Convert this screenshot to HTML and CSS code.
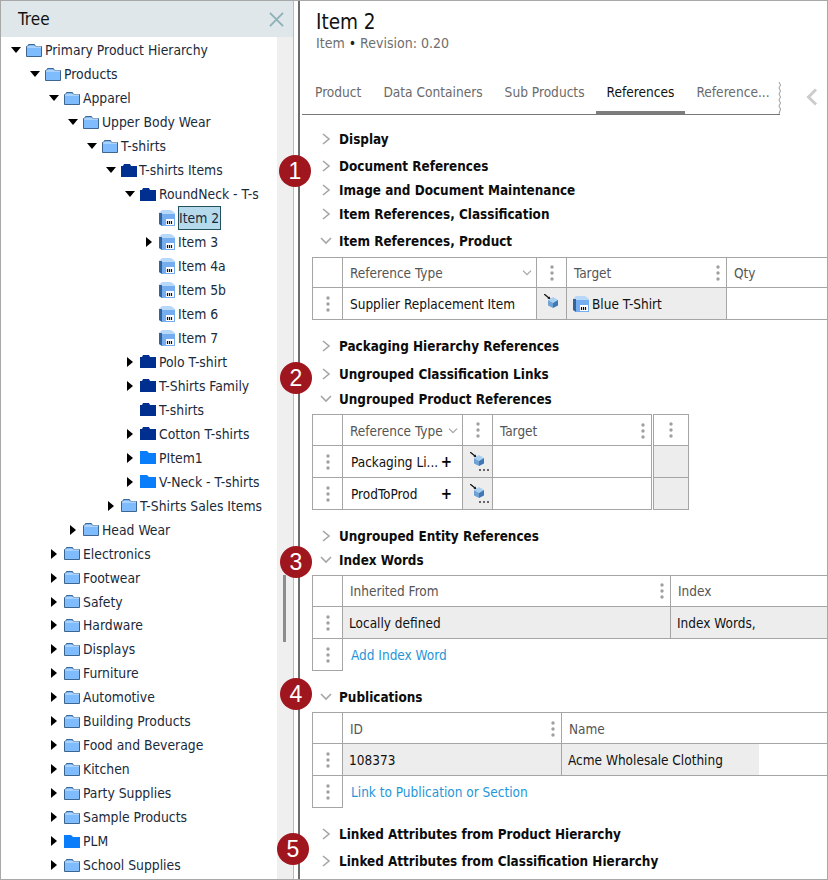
FILE: index.html
```html
<!DOCTYPE html>
<html lang="en">
<head>
<meta charset="utf-8">
<title>Item 2</title>
<link rel="stylesheet" href="styles.css">
</head>
<body>
<svg class="defs" aria-hidden="true">
  <symbol id="folder" viewBox="0 0 16 13"><path d="M.5 12.500V2.500H1.500L2.500 .5H8.500L9.500 2.500H15.500V12.500Z" fill="#7fbcfd" stroke="#3d6590"/><path d="M1 3H15" stroke="#d5e8fb"/></symbol>
  <symbol id="folder-dark" viewBox="0 0 16 13"><path d="M0 13V2H2L3 0H9L10 2H16V13Z" fill="#00308f"/></symbol>
  <symbol id="folder-bright" viewBox="0 0 16 13"><path d="M0 13V0H7L9 2H16V13Z" fill="#0a7dfb"/></symbol>
  <symbol id="item" viewBox="0 0 16 16"><path d="M0 3L3 0H12L16 3V16H3L0 14Z" fill="#b7d8f8"/><path d="M0 3L3 3V16L0 14Z" fill="#33659a"/><path d="M3 4H16V16H3Z" fill="#74aef0"/><path d="M7 9H15V15H7Z" fill="#fff"/><path d="M8.500 11V14M10.500 11V14M12.500 11V14" stroke="#111" stroke-width="1.200"/></symbol>
  <symbol id="kebab" viewBox="0 0 4 16"><circle cx="2" cy="2" r="1.700" fill="#a0a0a0"/><circle cx="2" cy="8" r="1.700" fill="#a0a0a0"/><circle cx="2" cy="14" r="1.700" fill="#a0a0a0"/></symbol>
  <symbol id="cube" viewBox="0 0 20 19"><path d="M0 0L5 4" stroke="#111" stroke-width="1.300"/><path d="M3.500 4.500L6.500 5.500L5.500 2.500Z" fill="#111"/><path d="M4 6L9 3L14 6L9 9Z" fill="#a7d0f2"/><path d="M4 6L9 9V14L4 11.500Z" fill="#6fa3d6"/><path d="M14 6L9 9V14L14 11.500Z" fill="#3f78b3"/></symbol>
  <symbol id="cube-more" viewBox="0 0 20 19"><use href="#cube"/><path d="M9 17h2v2h-2zM13 17h2v2h-2zM17 17h2v2h-2z" fill="#666"/></symbol>
  <symbol id="right" viewBox="0 0 10 12"><path d="M2 1L8 6L2 11" fill="none" stroke="#a5a5a5" stroke-width="1.600"/></symbol>
  <symbol id="down" viewBox="0 0 12 10"><path d="M1 2L6 7L11 2" fill="none" stroke="#a5a5a5" stroke-width="1.600"/></symbol>
</svg>
<div class="window">
  <aside class="tree-pane">
    <header class="tree-head"><span>Tree</span>
      <svg class="close" viewBox="0 0 16 16"><path d="M1 1L15 15M15 1L1 15" stroke="#8fb0b8" stroke-width="2"/></svg>
    </header>
    <div class="tree-body">
      <ul class="tree">
        <li class="d0"><i class="tw open"></i><svg class="fo"><use href="#folder"/></svg><span>Primary Product Hierarchy</span></li>
        <li class="d1"><i class="tw open"></i><svg class="fo"><use href="#folder"/></svg><span>Products</span></li>
        <li class="d2"><i class="tw open"></i><svg class="fo"><use href="#folder"/></svg><span>Apparel</span></li>
        <li class="d3"><i class="tw open"></i><svg class="fo"><use href="#folder"/></svg><span>Upper Body Wear</span></li>
        <li class="d4"><i class="tw open"></i><svg class="fo"><use href="#folder"/></svg><span>T-shirts</span></li>
        <li class="d5"><i class="tw open"></i><svg class="fo"><use href="#folder-dark"/></svg><span class="tight">T-shirts Items</span></li>
        <li class="d6"><i class="tw open"></i><svg class="fo"><use href="#folder-dark"/></svg><span>RoundNeck - T-s</span></li>
        <li class="d7"><i class="tw"></i><svg class="it"><use href="#item"/></svg><span class="sel">Item 2</span></li>
        <li class="d7"><i class="tw closed"></i><svg class="it"><use href="#item"/></svg><span>Item 3</span></li>
        <li class="d7"><i class="tw"></i><svg class="it"><use href="#item"/></svg><span>Item 4a</span></li>
        <li class="d7"><i class="tw"></i><svg class="it"><use href="#item"/></svg><span>Item 5b</span></li>
        <li class="d7"><i class="tw"></i><svg class="it"><use href="#item"/></svg><span>Item 6</span></li>
        <li class="d7"><i class="tw"></i><svg class="it"><use href="#item"/></svg><span>Item 7</span></li>
        <li class="d6"><i class="tw closed"></i><svg class="fo"><use href="#folder-dark"/></svg><span>Polo T-shirt</span></li>
        <li class="d6"><i class="tw closed"></i><svg class="fo"><use href="#folder-dark"/></svg><span>T-Shirts Family</span></li>
        <li class="d6"><i class="tw"></i><svg class="fo"><use href="#folder-dark"/></svg><span>T-shirts</span></li>
        <li class="d6"><i class="tw closed"></i><svg class="fo"><use href="#folder-dark"/></svg><span>Cotton T-shirts</span></li>
        <li class="d6"><i class="tw closed"></i><svg class="fo"><use href="#folder-bright"/></svg><span>PItem1</span></li>
        <li class="d6"><i class="tw closed"></i><svg class="fo"><use href="#folder-bright"/></svg><span>V-Neck - T-shirts</span></li>
        <li class="d5"><i class="tw closed"></i><svg class="fo"><use href="#folder"/></svg><span>T-Shirts Sales Items</span></li>
        <li class="d3"><i class="tw closed"></i><svg class="fo"><use href="#folder"/></svg><span>Head Wear</span></li>
        <li class="d2"><i class="tw closed"></i><svg class="fo"><use href="#folder"/></svg><span>Electronics</span></li>
        <li class="d2"><i class="tw closed"></i><svg class="fo"><use href="#folder"/></svg><span>Footwear</span></li>
        <li class="d2"><i class="tw closed"></i><svg class="fo"><use href="#folder"/></svg><span>Safety</span></li>
        <li class="d2"><i class="tw closed"></i><svg class="fo"><use href="#folder"/></svg><span>Hardware</span></li>
        <li class="d2"><i class="tw closed"></i><svg class="fo"><use href="#folder"/></svg><span>Displays</span></li>
        <li class="d2"><i class="tw closed"></i><svg class="fo"><use href="#folder"/></svg><span>Furniture</span></li>
        <li class="d2"><i class="tw closed"></i><svg class="fo"><use href="#folder"/></svg><span>Automotive</span></li>
        <li class="d2"><i class="tw closed"></i><svg class="fo"><use href="#folder"/></svg><span>Building Products</span></li>
        <li class="d2"><i class="tw closed"></i><svg class="fo"><use href="#folder"/></svg><span>Food and Beverage</span></li>
        <li class="d2"><i class="tw closed"></i><svg class="fo"><use href="#folder"/></svg><span>Kitchen</span></li>
        <li class="d2"><i class="tw closed"></i><svg class="fo"><use href="#folder"/></svg><span>Party Supplies</span></li>
        <li class="d2"><i class="tw closed"></i><svg class="fo"><use href="#folder"/></svg><span>Sample Products</span></li>
        <li class="d2"><i class="tw closed"></i><svg class="fo"><use href="#folder-bright"/></svg><span>PLM</span></li>
        <li class="d2"><i class="tw closed"></i><svg class="fo"><use href="#folder"/></svg><span>School Supplies</span></li>
      </ul>
      <div class="track"><div class="thumb"></div></div>
    </div>
  </aside>
  <main class="main">
    <h1 class="title">Item 2</h1>
    <p class="subtitle">Item <b>•</b> Revision: 0.20</p>
    <div class="tabbar">
      <nav class="tabs">
        <a class="tab">Product</a>
        <a class="tab">Data Containers</a>
        <a class="tab">Sub Products</a>
        <a class="tab active">References</a>
        <a class="tab last">Reference...</a>
        <svg class="wave" viewBox="0 0 5 32"><path d="M2 0L3.500 3L2 6L3.500 9L2 12L3.500 15L2 18L3.500 21L2 24L3.500 27L2 32" fill="none" stroke="#999"/></svg>
      </nav>
      <svg class="prev" viewBox="0 0 12 18"><path d="M10 1.500L2.500 9L10 16.500" fill="none" stroke="#ccc" stroke-width="3"/></svg>
    </div>
    <div class="sec first"><svg class="chev"><use href="#right"/></svg>Display</div>
    <div class="sec m3"><svg class="chev"><use href="#right"/></svg>Document References</div>
    <div class="sec"><svg class="chev"><use href="#right"/></svg>Image and Document Maintenance</div>
    <div class="sec"><svg class="chev"><use href="#right"/></svg>Item References, Classification</div>
    <div class="sec m3"><svg class="chev"><use href="#down"/></svg>Item References, Product</div>
    <table class="grid t1">
      <colgroup><col class="c30"><col class="c194"><col class="c30"><col class="c160"><col class="c200"></colgroup>
      <tr class="hr"><th></th><th><span class="hc">Reference Type<svg class="sort"><use href="#down"/></svg></span></th><th><svg class="keb"><use href="#kebab"/></svg></th><th><span class="hc">Target<svg class="keb"><use href="#kebab"/></svg></span></th><th>Qty</th></tr>
      <tr class="br"><td class="kc"><svg class="keb"><use href="#kebab"/></svg></td><td>Supplier Replacement Item</td><td class="grey ic"><svg class="cube"><use href="#cube"/></svg></td><td class="grey"><span class="val"><svg class="it sm"><use href="#item"/></svg>Blue T-Shirt</span></td><td></td></tr>
    </table>
    <div class="sec m14"><svg class="chev"><use href="#right"/></svg>Packaging Hierarchy References</div>
    <div class="sec m4"><svg class="chev"><use href="#right"/></svg>Ungrouped Classification Links</div>
    <div class="sec m1"><svg class="chev"><use href="#down"/></svg>Ungrouped Product References</div>
    <table class="grid t2">
      <colgroup><col class="c30"><col class="c120"><col class="c30"><col class="c160"><col class="c36"></colgroup>
      <tr class="hr"><th></th><th><span class="hc">Reference Type<svg class="sort"><use href="#down"/></svg></span></th><th><svg class="keb"><use href="#kebab"/></svg></th><th class="dbl"><span class="hc">Target<svg class="keb"><use href="#kebab"/></svg></span></th><th><svg class="keb"><use href="#kebab"/></svg></th></tr>
      <tr class="br"><td class="kc"><svg class="keb"><use href="#kebab"/></svg></td><td><span class="hc dark">Packaging Li...<b class="plus">+</b></span></td><td class="grey ic"><svg class="cube"><use href="#cube-more"/></svg></td><td class="dbl"></td><td class="grey"></td></tr>
      <tr class="br"><td class="kc"><svg class="keb"><use href="#kebab"/></svg></td><td><span class="hc dark">ProdToProd<b class="plus">+</b></span></td><td class="grey ic"><svg class="cube"><use href="#cube-more"/></svg></td><td class="dbl"></td><td class="grey"></td></tr>
    </table>
    <div class="sec m14"><svg class="chev"><use href="#right"/></svg>Ungrouped Entity References</div>
    <div class="sec"><svg class="chev"><use href="#down"/></svg>Index Words</div>
    <table class="grid t3">
      <colgroup><col class="c30"><col class="c328"><col class="c200"></colgroup>
      <tr class="hr"><th></th><th><span class="hc">Inherited From<svg class="keb"><use href="#kebab"/></svg></span></th><th>Index</th></tr>
      <tr class="br"><td class="kc"><svg class="keb"><use href="#kebab"/></svg></td><td class="grey tightcell">Locally defined</td><td class="grey tightcell">Index Words,</td></tr>
      <tr class="br"><td class="kc"><svg class="keb"><use href="#kebab"/></svg></td><td class="plain link" colspan="2">Add Index Word</td></tr>
    </table>
    <div class="sec m14"><svg class="chev"><use href="#down"/></svg>Publications</div>
    <table class="grid t4">
      <colgroup><col class="c30"><col class="c219"><col class="c197"><col class="c200"></colgroup>
      <tr class="hr"><th></th><th><span class="hc">ID<svg class="keb"><use href="#kebab"/></svg></span></th><th colspan="2">Name</th></tr>
      <tr class="br"><td class="kc"><svg class="keb"><use href="#kebab"/></svg></td><td class="grey tightcell">108373</td><td class="grey tightcell nob">Acme Wholesale Clothing</td><td class="nol"></td></tr>
      <tr class="br"><td class="kc"><svg class="keb"><use href="#kebab"/></svg></td><td class="plain link" colspan="3">Link to Publication or Section</td></tr>
    </table>
    <div class="sec m14"><svg class="chev"><use href="#right"/></svg>Linked Attributes from Product Hierarchy</div>
    <div class="sec m3"><svg class="chev"><use href="#right"/></svg>Linked Attributes from Classification Hierarchy</div>
  </main>
  <span class="badge b1">1</span>
  <span class="badge b2">2</span>
  <span class="badge b3">3</span>
  <span class="badge b4">4</span>
  <span class="badge b5">5</span>
</div>
</body>
</html>
```
FILE: styles.css
```css
* { box-sizing: border-box; }
html, body { margin: 0; padding: 0; }
body { width: 828px; height: 880px; overflow: hidden; background: #fff; color: #111; font-family: "DejaVu Sans", sans-serif; font-stretch: condensed; font-size: 13.6px; }
.defs { position: absolute; width: 0; height: 0; }
.window { position: relative; display: flex; width: 828px; height: 880px; border: 1px solid #a8a8a8; overflow: hidden; }

.tree-pane { display: flex; flex-direction: column; flex: 0 0 293px; border-right: 1px solid #a9c3c8; }
.tree-head { flex: 0 0 36px; display: flex; align-items: center; justify-content: space-between; padding: 0 9px 0 17px; background: #dfe7ea; font-size: 17px; }
.close { width: 15px; height: 15px; }
.tree-body { flex: 1; display: flex; min-height: 0; }
.tree { flex: 1; list-style: none; margin: 0; padding: 1.25px 0 0; background: #fff; overflow: hidden; font-size: 13.8px; }
.tree li { display: flex; align-items: center; height: 23.97px; white-space: nowrap; color: #1a2a3a; }
.d0 { padding-left: 8px; }
.d1 { padding-left: 27px; }
.d2 { padding-left: 46px; }
.d3 { padding-left: 65px; }
.d4 { padding-left: 84px; }
.d5 { padding-left: 103px; }
.d6 { padding-left: 122px; }
.d7 { padding-left: 141px; }
.tw { flex: 0 0 16px; display: flex; justify-content: center; }
.tw.open::before { content: ""; border: 5px solid transparent; border-top: 6px solid #000; border-bottom: 0; margin-left: -3px; }
.tw.closed::before { content: ""; border: 5px solid transparent; border-left: 6px solid #000; border-right: 0; margin-left: -3px; }
.fo { flex: 0 0 16px; width: 16px; height: 13px; margin-left: 1px; margin-right: 3px; }
.it { flex: 0 0 16px; width: 16px; height: 16px; margin-left: 1px; margin-right: 3px; }
.tight { margin-left: -1px; }
.sel { padding: 0 1px 0 0; line-height: 22px; background: #b5daec; border: 1px solid #23505f; }
.track { flex: 0 0 16px; position: relative; background: #efefef; }
.thumb { position: absolute; left: 6px; top: 538px; width: 3px; height: 67px; background: #8d8d8d; }

.main { flex: 1; min-width: 0; margin-left: 4px; border-left: 2px solid #6c6c6c; overflow: hidden; }
.title { margin: 0; padding: 9px 0 0 16px; font-size: 20.5px; line-height: 24px; font-weight: 400; color: #111; }
.subtitle { margin: 0; padding: 0 0 0 16px; font-size: 14px; line-height: 18px; color: #6e6e6e; }
.subtitle b { color: #222; font-weight: 400; }
.tabbar { display: flex; align-items: flex-start; margin-top: 26px; }
.tabs { display: flex; flex: 0 0 478px; height: 37px; margin-left: 2px; padding-left: 2px; border-bottom: 1px solid #777; position: relative; }
.tab { padding: 0 11px; height: 36px; line-height: 28px; color: #6a6a6a; white-space: nowrap; }
.tab.active { color: #111; border-bottom: 3px solid #7d7d7d; }
.tab.last { width: 86px; padding-right: 0; overflow: hidden; }
.wave { width: 5px; height: 32px; margin-left: auto; margin-right: -2px; margin-top: 4px; }
.prev { width: 12px; height: 18px; margin: 10px 0 0 26px; }

.sec { display: flex; align-items: center; height: 24px; padding-left: 20px; font-size: 13.4px; font-weight: 700; color: #0c0c0c; white-space: nowrap; }
.first { margin-top: 12px; }
.m1 { margin-top: 1px; }
.m3 { margin-top: 3px; }
.m4 { margin-top: 4px; }
.m14 { margin-top: 14px; }
.chev { width: 12px; height: 12px; margin-right: 7px; flex: none; }

.grid { border-collapse: collapse; table-layout: fixed; margin: 3px 0 0 12px; font-size: 13.5px; }
.t1 { width: 614px; margin-top: 4px; }
.t2 { width: 376px; }
.t3 { width: 558px; }
.t4 { width: 646px; }
.c30 { width: 30px; }
.c36 { width: 36px; }
.c120 { width: 120px; }
.c160 { width: 160px; }
.c194 { width: 194px; }
.c197 { width: 197px; }
.c200 { width: 200px; }
.c219 { width: 219px; }
.c328 { width: 328px; }
.grid th, .grid td { border: 1px solid #a5a5a5; padding: 0 7px; font-weight: 400; text-align: left; white-space: nowrap; overflow: hidden; }
.grid th { color: #555; }
.t2 th, .t4 th { padding-top: 1px; }
.hr { height: 31px; }
.t1 .hr { height: 30px; }
.br { height: 32px; }
.grid td { color: #111; }
.grid th:first-child, .kc { padding: 0; text-align: center; }
.t1 th:nth-child(3), .t2 th:nth-child(3), .t2 th:last-child { padding: 0; text-align: center; }
.grey { background: #ededed; }
.grid .tightcell { padding-left: 6px; }
.grid .ic { padding: 6px 0 0 7px; vertical-align: top; }
.keb { width: 4px; height: 16px; display: block; margin: auto; }
.hc { display: flex; align-items: center; justify-content: space-between; }
.hc .keb { margin: 0 -1px 0 0; }
.sort { width: 10px; height: 8px; margin-right: -3px; }
.dark { color: #111; padding-left: 1px; }
.plus { color: #000; font-size: 15px; margin-right: 3px; }
.val { display: flex; align-items: center; margin-left: -1px; }
.val .it { margin-left: 0; margin-right: 3px; }
.cube { width: 20px; height: 19px; display: block; }
.dbl { border-right: 3px double #a5a5a5 !important; }
.grid .plain { border: 0; }
.link { color: #1f96d8 !important; padding-left: 8px !important; }
.grid .nol { border-left: 0; }
.grid .nob { border-right: 0; }

.badge { position: absolute; width: 32px; height: 32px; border-radius: 50%; background: #a0161f; color: #fff; font-family: "Liberation Sans", sans-serif; font-stretch: normal; font-size: 23px; line-height: 32px; text-align: center; }
.b1 { left: 278px; top: 154px; }
.b2 { left: 279px; top: 361px; }
.b3 { left: 279px; top: 545px; }
.b4 { left: 279px; top: 677px; }
.b5 { left: 276px; top: 832px; }
```
